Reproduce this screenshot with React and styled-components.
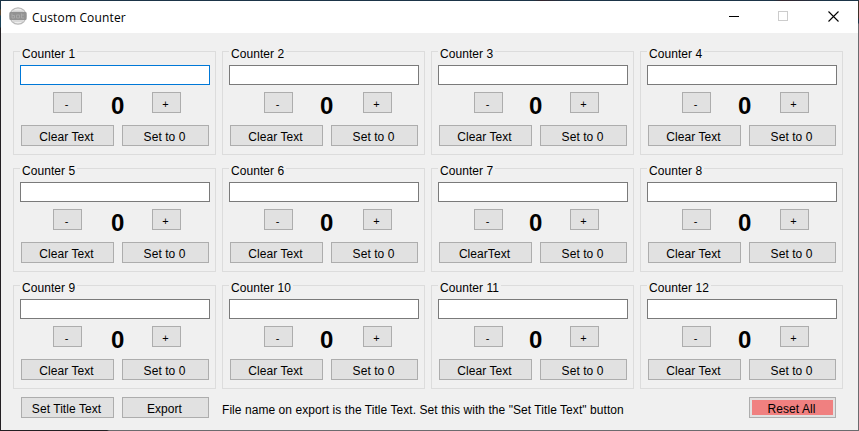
import React from "react";
import styled, { createGlobalStyle } from "styled-components";

const GlobalStyle = createGlobalStyle`
  *, *::before, *::after { box-sizing: border-box; }
  body { margin: 0; overflow: hidden; background: #1f2b38; }
`;

const Window = styled.div`
  width: 859px;
  height: 431px;
  display: flex;
  flex-direction: column;
  border: 1px solid transparent;
  background:
    linear-gradient(#f0f0f0, #f0f0f0) padding-box,
    linear-gradient(90deg, #1b3447 62%, #33232b 63%, #1b3447 66%, #1b3447 90%, #33232b 91%, #1b3447 96%) 0 0 / 100% 1px no-repeat border-box,
    linear-gradient(#1b3447 9px, #5b4630 10px 15px, #1b4258 16px 27px, #231f23 28px) 0 0 / 1px 100% no-repeat border-box,
    linear-gradient(#3b3026 18px, #1b3447 19px 23px, #6b6b6e 24px) 100% 0 / 1px 100% no-repeat border-box,
    linear-gradient(90deg, #231f23 107px, #6b6b6e 109px) 0 100% / 100% 1px no-repeat border-box;
  font: 12px/14px "Liberation Sans", Arial, sans-serif;
  letter-spacing: 0.06px;
  color: #000;
`;

const TitleBar = styled.header`
  height: 32px;
  flex: none;
  display: flex;
  align-items: flex-start;
  background: #fff;
  padding-left: 8px;
`;

const Title = styled.h1`
  margin: 9px 0 0 5px;
  flex: 1;
  font: 400 12px/16px "Open Sans", "Noto Sans", sans-serif;
  letter-spacing: 0.15px;
`;

const CaptionButton = styled.button`
  width: ${(p) => p.$width || 49}px;
  height: 30px;
  padding: 0 0 0 ${(p) => p.$lead || 0}px;
  border: 0;
  background: none;
  display: grid;
  place-items: center;
  svg { display: block; }
`;

const Content = styled.main`
  flex: 1;
  padding: 12px 0 0 12px;
`;

const CounterGrid = styled.div`
  display: grid;
  grid-template-columns: repeat(4, 203px);
  grid-auto-rows: 110px;
  gap: 7px 6px;
`;

const Group = styled.section`
  display: flex;
  flex-direction: column;
  margin-top: 6px;
  height: 104px;
  border: 1px solid #dcdcdc;
  padding-left: 6px;
`;

const Legend = styled.h2`
  align-self: flex-start;
  flex: none;
  height: 14px;
  margin: -5px 0 0;
  padding: 0 2px;
  font: inherit;
  background: #f0f0f0;
`;

const TextBox = styled.input`
  width: 190px;
  height: 20px;
  flex: none;
  margin: 4px 0 0;
  padding: 0 3px;
  border: 1px solid ${(p) => (p.$focused ? "#0078d7" : "#7a7a7a")};
  background: #fff;
  outline: none;
  font: inherit;
`;

const Stepper = styled.div`
  display: flex;
  height: 21px;
  margin-top: 7px;
  padding-left: ${(p) => p.$start}px;
`;

const Button = styled.button`
  width: ${(p) => p.$width}px;
  height: 21px;
  flex: none;
  padding: 2px 2px 0 0;
  border: 1px solid #adadad;
  background: #e1e1e1;
  color: #000;
  font: inherit;
  letter-spacing: inherit;
  line-height: 19px;
  text-align: center;
  white-space: nowrap;
`;

const StepButton = styled(Button)`
  width: 29px;
  font-size: 11px;
`;

const ResetButton = styled(Button)`
  margin-left: auto;
  padding: 2px;
  line-height: 17px;
  background: #f08080 content-box;
  box-shadow: inset 0 0 0 2px #e1e1e1;
  span { position: relative; top: 1px; left: -1px; }
`;

const Value = styled.output`
  width: ${(p) => p.$width}px;
  padding-left: ${(p) => p.$lead}px;
  font-weight: 700;
  font-size: 24px;
  line-height: 27px;
`;

const ButtonRow = styled.div`
  display: flex;
  gap: 8px;
  margin-top: 12px;
  padding-left: 1px;
`;

const Footer = styled.footer`
  display: flex;
  gap: 8px;
  margin-top: 8px;
  padding: 0 22px 0 8px;
`;

const Note = styled.p`
  margin: 6px 0 0 5px;
  white-space: nowrap;
`;

const IconSvg = styled.svg`
  flex: none;
  margin-top: 6px;
`;

// Distance of the minus and plus buttons from the left edge of their group, by column.
const stepperColumns = [
  { minus: 40, plus: 139 },
  { minus: 42, plus: 141 },
  { minus: 43, plus: 139 },
  { minus: 42, plus: 140 },
];

const counters = Array.from({ length: 12 }, (_, i) => ({
  id: i + 1,
  clearLabel: i === 6 ? "ClearText" : "Clear Text",
  ...stepperColumns[i % 4],
}));

function AppIcon() {
  return (
    <IconSvg width="18" height="18" viewBox="0 0 18 18">
      <circle cx="9" cy="9" r="8.2" fill="#eeeeee" stroke="#b9b9b9" strokeWidth="1.2" />
      <path d="M3.5 4.2h11M3.5 14h11" stroke="#d2d2d2" strokeWidth="1.5" />
      <rect x="0.5" y="5" width="17" height="8" rx="1" fill="#929292" />
      <path d="M3 6.5v4.5h2.5V8.5H3M7.5 8h3v3h-3zM12.5 6.5v4.5H15M12 8h3" fill="none" stroke="#a8a8a8" />
    </IconSvg>
  );
}

function Counter({ id, clearLabel, minus, plus }) {
  return (
    <Group>
      <Legend>Counter {id}</Legend>
      <TextBox $focused={id === 1} />
      <Stepper $start={minus - 7}>
        <StepButton>-</StepButton>
        <Value $width={plus - minus - 29} $lead={98 - minus - 29}>0</Value>
        <StepButton>+</StepButton>
      </Stepper>
      <ButtonRow>
        <Button $width={93}>{clearLabel}</Button>
        <Button $width={87}>Set to 0</Button>
      </ButtonRow>
    </Group>
  );
}

export default function App() {
  return (
    <>
      <GlobalStyle />
      <Window>
        <TitleBar>
          <AppIcon />
          <Title>Custom Counter</Title>
          <CaptionButton aria-label="Minimize">
            <svg width="10" height="10"><path d="M0 5.5h10" stroke="#000" /></svg>
          </CaptionButton>
          <CaptionButton aria-label="Maximize" disabled>
            <svg width="10" height="10"><rect x=".5" y=".5" width="9" height="9" fill="none" stroke="#ccc" /></svg>
          </CaptionButton>
          <CaptionButton aria-label="Close" $width={51} $lead={2}>
            <svg width="11" height="11"><path d="M.5 .5l10 10M10.5 .5l-10 10" stroke="#000" strokeWidth="1.1" /></svg>
          </CaptionButton>
        </TitleBar>
        <Content>
          <CounterGrid>
            {counters.map((c) => <Counter key={c.id} {...c} />)}
          </CounterGrid>
          <Footer>
            <Button $width={93}>Set Title Text</Button>
            <Button $width={87}>Export</Button>
            <Note>File name on export is the Title Text. Set this with the "Set Title Text" button</Note>
            <ResetButton $width={87}><span>Reset All</span></ResetButton>
          </Footer>
        </Content>
      </Window>
    </>
  );
}
